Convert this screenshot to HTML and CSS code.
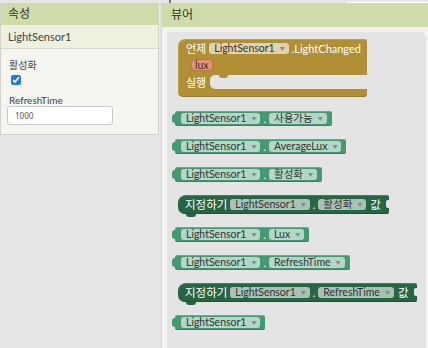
FILE: index.html
```html
<!DOCTYPE html>
<html lang="ko">
<head>
<meta charset="utf-8">
<link rel="stylesheet" href="styles.css">
</head>
<body>
<div class="topbar"><span class="mark"></span><span class="wline"></span></div>
<div class="main">
  <aside class="props">
    <div class="props-head">속성</div>
    <div class="props-comp">LightSensor1</div>
    <div class="props-body">
      <div class="prop-label">활성화</div>
      <input class="chk" type="checkbox" checked>
      <div class="prop-label second">RefreshTime</div>
      <input class="txt" type="text" value="1000">
    </div>
  </aside>
  <section class="viewer">
    <div class="viewer-head">뷰어</div>
    <div class="viewer-body">
      <div class="workspace">
        <div class="blk evt">
          <div class="erow r1"><span class="w">언제</span><span class="fld efld">LightSensor1<span class="arr">▼</span></span><span class="w">.LightChanged</span></div>
          <div class="erow r2"><span class="param">lux</span></div>
          <div class="erow r3"><span class="w">실행</span><span class="slot"></span></div>
        </div>

        <div class="blk get"><span class="fld">LightSensor1<span class="arr">▼</span></span><span class="w dot">.</span><span class="fld">사용가능<span class="arr">▼</span></span></div>
        <div class="blk get"><span class="fld">LightSensor1<span class="arr">▼</span></span><span class="w dot">.</span><span class="fld">AverageLux<span class="arr">▼</span></span></div>
        <div class="blk get"><span class="fld">LightSensor1<span class="arr">▼</span></span><span class="w dot">.</span><span class="fld">활성화<span class="arr">▼</span></span></div>

        <div class="blk set"><span class="w kw">지정하기</span><span class="fld">LightSensor1<span class="arr">▼</span></span><span class="w dot">.</span><span class="fld">활성화<span class="arr">▼</span></span><span class="w kw">값</span></div>

        <div class="blk get"><span class="fld">LightSensor1<span class="arr">▼</span></span><span class="w dot">.</span><span class="fld">Lux<span class="arr">▼</span></span></div>
        <div class="blk get"><span class="fld">LightSensor1<span class="arr">▼</span></span><span class="w dot">.</span><span class="fld">RefreshTime<span class="arr">▼</span></span></div>

        <div class="blk set"><span class="w kw">지정하기</span><span class="fld">LightSensor1<span class="arr">▼</span></span><span class="w dot">.</span><span class="fld">RefreshTime<span class="arr">▼</span></span><span class="w kw">값</span></div>

        <div class="blk get"><span class="fld">LightSensor1<span class="arr">▼</span></span></div>
      </div>
    </div>
  </section>
</div>
</body>
</html>
```

FILE: styles.css
```css
* { box-sizing: border-box; margin: 0; padding: 0; }
html, body { width: 428px; height: 348px; overflow: hidden; }
body {
  font-family: Lato, "Noto Sans CJK KR", sans-serif;
  color: #333;
  background-color: #ececec;
  background-image:
    linear-gradient(90deg, rgba(0,0,0,0.025) 50%, transparent 50%),
    linear-gradient(rgba(0,0,0,0.025) 50%, transparent 50%);
  background-size: 2px 2px;
  display: flex;
  flex-direction: column;
}
.topbar { height: 3px; display: flex; flex: none; }
.mark { width: 2px; height: 3px; margin-left: 169px; background: #777; }
.wline { width: 81px; height: 1px; margin-top: 2px; margin-left: auto; background: #fff; }

.main { flex: 1; display: flex; gap: 2px; min-height: 0; }

/* properties panel */
.props {
  width: 159px; flex: none; align-self: flex-start;
  border: 1px solid #d3d3cc; border-top: none;
  background: #f6f6f0;
}
.props-head {
  height: 22px; background: #cddca9; padding-left: 7px;
  font-size: 12px; line-height: 22px; color: #333;
}
.props-comp {
  height: 24px; background: #eef1df; border-bottom: 1px solid #d8d8cf;
  padding-left: 7px; font-size: 11px; line-height: 23px; color: #444;
}
.props-body { padding: 10px 7px 9px 6px; display: flex; flex-direction: column; align-items: flex-start; }
.prop-label { font-size: 10px; line-height: 13px; color: #444; padding-left: 2px; }
.prop-label.second { margin-top: 9px; line-height: 12px; }
.chk { width: 10px; height: 10px; margin: 3px 0 0 4px; accent-color: #1e7be4; }
.txt {
  width: 106px; height: 19px; border: 1px solid #c9c9c9; border-radius: 3px;
  background: #fff; padding-left: 7px; font-family: "Noto Sans", sans-serif;
  font-size: 8px; color: #555; outline: none;
}

/* viewer */
.viewer { flex: 1; display: flex; flex-direction: column; background: #f3f3f1; border-left: 1px solid #d6d6d0; }
.viewer-head { height: 24px; flex: none; background: #cddca9; padding-left: 9px; font-size: 12px; line-height: 24px; color: #333; }
.viewer-body { flex: 1; padding: 5px 2px 0 5px; min-height: 0; }
.workspace {
  height: 100%; background: #e4e4e4; border-radius: 0 6px 0 0;
  display: flex; flex-direction: column; align-items: flex-start; gap: 13px;
  padding: 7px 0 0 11px;
}

/* blocks */
.blk { position: relative; display: flex; align-items: center; font-size: 11px; line-height: 1; }
.w { color: #fff; white-space: nowrap; }
.fld {
  display: inline-flex; align-items: center; gap: 5px;
  height: 11px; padding: 0 4px 0 5px; border-radius: 3px;
  background: rgba(255,255,255,0.6); color: #333; font-size: 10.5px; white-space: nowrap;
}
.arr { font-size: 5px; color: #8a8a8a; }
.dot { margin: 0 3px; }

.evt {
  flex-direction: column; align-items: stretch;
  height: 58px; padding: 3px 0 8px 8px;
  background: #b18f35; border-radius: 7px 3px 3px 5px;
  box-shadow: inset 1px 1px 0 rgba(255,255,255,0.15), inset 0 -1px 0 rgba(0,0,0,0.15);
  margin-bottom: 1px;
}
.erow { display: flex; align-items: center; }
.r1 { height: 12px; gap: 3px; padding-right: 6px; }
.r2 { height: 12px; margin-top: 5px; padding-left: 5px; }
.param {
  height: 12px; padding: 0 3px; border-radius: 4px;
  background: #e59373; border: 1px solid #c76a4a; color: #333; font-size: 10.5px;
  display: inline-flex; align-items: center;
}
.r3 { height: 14px; margin-top: 4px; gap: 4px; }
.slot { position: relative; flex: 1; align-self: stretch; background: #e4e4e4; border-radius: 5px 0 0 5px; }
.slot::before {
  content: ""; position: absolute; left: 9px; top: 0; width: 9px; height: 3px;
  background: #b18f35; border-radius: 0 0 4px 4px;
}

.get {
  height: 15px; margin-left: -3px; padding: 0 5px 0 6px;
  background: #439970; border-radius: 2px;
  box-shadow: inset 0 1px 0 rgba(255,255,255,0.2), inset 0 -1px 0 rgba(0,0,0,0.15);
}
.get::before {
  content: ""; position: absolute; left: -3px; top: 3px; width: 4px; height: 9px;
  background: #439970; border-radius: 3px 0 0 3px;
}

.set {
  height: 19px; padding: 0 8px 0 7px;
  background: #266643; border-radius: 8px 2px 2px 7px;
  box-shadow: inset 0 1px 0 rgba(255,255,255,0.15), inset 0 -1px 0 rgba(0,0,0,0.2);
}
.set .kw { font-size: 11.5px; }
.set .kw:first-child { margin-right: 3px; }
.set .kw:last-child { margin-left: 4px; }
.set::before {
  content: ""; position: absolute; right: 0; top: 5px; width: 3px; height: 8px;
  background: #e4e4e4; border-radius: 2px 0 0 2px;
}
.set::after {
  content: ""; position: absolute; left: 8px; bottom: -3px; width: 10px; height: 3px;
  background: #266643; border-radius: 0 0 3px 3px;
}
```
